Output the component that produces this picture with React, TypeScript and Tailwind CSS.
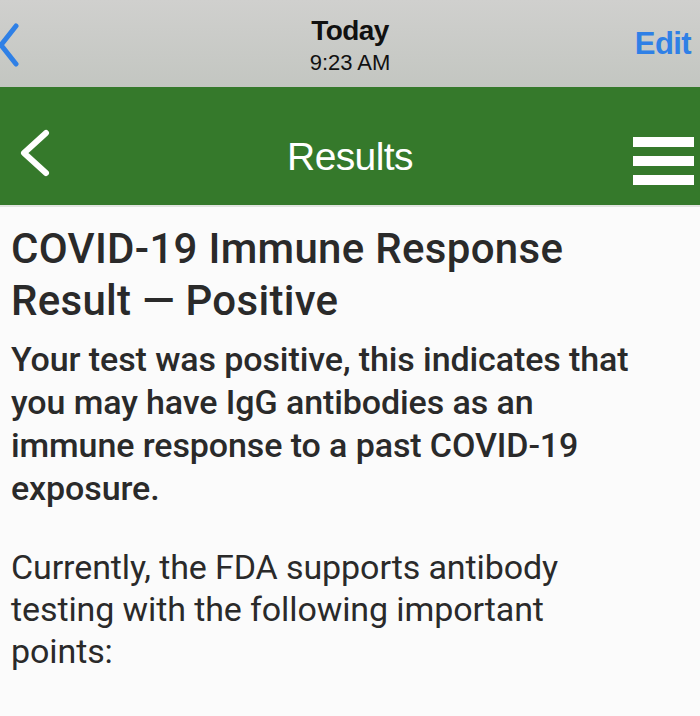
export default function App() {
  return (
    <div className="w-[700px] h-[716px] overflow-hidden bg-[#fbfbfb]" style={{ fontFamily: 'Roboto, "Liberation Sans", sans-serif' }}>
      {/* top bar */}
      <div className="h-[87px] bg-gradient-to-b from-[#d0d0ce] to-[#c3c6c1] flex items-center justify-between font-['Liberation_Sans',Arial,sans-serif]">
        <div className="w-[80px] flex items-center">
          <svg width="24" height="46" viewBox="0 0 24 46" className="ml-[-3px] mt-[2px]">
            <path d="M19 4 L4 23 L19 42" fill="none" stroke="#2f80e6" strokeWidth="5" strokeLinecap="round" strokeLinejoin="round" />
          </svg>
        </div>
        <div className="flex flex-col items-center text-[#111] mt-[2px]">
          <div className="text-[28px] font-bold leading-[32px] tracking-[-0.6px]">Today</div>
          <div className="text-[22px] leading-[24px] mt-[4px]">9:23 AM</div>
        </div>
        <div className="w-[80px] text-right pr-[9px] text-[31px] text-[#2f80e6] font-semibold tracking-[-0.6px] mt-[2px]">Edit</div>
      </div>

      {/* green header */}
      <div className="h-[120px] bg-[#35792b] flex items-center justify-between pt-[14px] font-['Liberation_Sans',Arial,sans-serif] border-b-2 border-[#e2e4e1]">
        <div className="w-[80px] pl-[18px]">
          <svg width="32" height="48" viewBox="0 0 32 48">
            <path d="M28 4 L6 24 L28 44" fill="none" stroke="#ffffff" strokeWidth="6" strokeLinecap="round" strokeLinejoin="round" />
          </svg>
        </div>
        <div className="text-white text-[39px] tracking-[-0.6px] mt-[8px]">Results</div>
        <div className="w-[80px] flex flex-col items-end gap-[9px] pr-[6px] pt-[16px]">
          <div className="w-[61px] h-[10px] bg-white" />
          <div className="w-[61px] h-[10px] bg-white" />
          <div className="w-[61px] h-[10px] bg-white" />
        </div>
      </div>

      {/* content */}
      <div className="pl-[11px] w-[648px] text-[#2a2a2a]">
        <h1 className="mt-[16px] text-[42px] leading-[52px] font-medium tracking-[0.3px]">
          COVID-19 Immune Response Result — Positive
        </h1>
        <p className="mt-[11px] text-[34px] leading-[43px] font-medium tracking-[-0.1px]">
          Your test was positive, this indicates that you may have IgG antibodies as an immune response to a past COVID-19 exposure.
        </p>
        <p className="mt-[36px] text-[34px] leading-[42px] tracking-[-0.1px]">
          Currently, the FDA supports antibody testing with the following important points:
        </p>
      </div>
    </div>
  )
}
